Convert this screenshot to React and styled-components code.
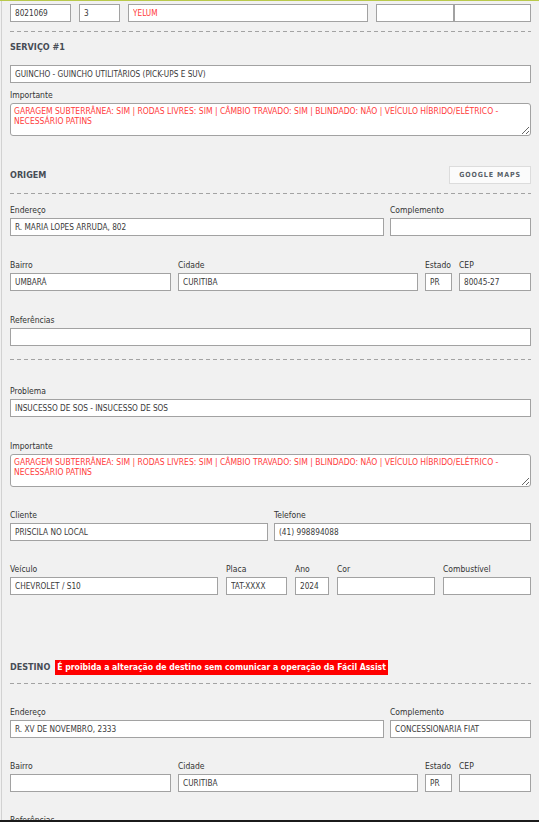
import React from 'react';
import styled, { createGlobalStyle } from 'styled-components';

const Global = createGlobalStyle`
  html, body {
    margin: 0;
    padding: 0;
    background: #f1f1f1;
  }
  body {
    font-family: 'DejaVu Sans Condensed', 'DejaVu Sans', sans-serif;
    font-stretch: condensed;
    color: #333;
    overflow: hidden;
  }
`;

const Screen = styled.div`
  border-top: 1px solid #b9c94c;
  min-height: 822px;
  box-sizing: border-box;
`;

const Panel = styled.div`
  margin-left: 1px;
  border-left: 1px solid #d2d2d2;
  padding: 3px 8px 0 8px;
  min-height: 822px;
  box-sizing: border-box;
`;

const Row = styled.div`
  display: grid;
  grid-template-columns: ${p => p.$cols || '1fr'};
  column-gap: ${p => p.$gap || '6px'};
  margin-top: ${p => p.$mt || 0}px;
`;

const Pair = styled.div`
  display: grid;
  grid-template-columns: 78px 1fr;
`;

const Divider = styled.div`
  height: 1px;
  margin-top: ${p => p.$mt || 0}px;
  background: repeating-linear-gradient(90deg, #a3a3a3 0 4px, transparent 4px 7px);
`;

const SectionHead = styled.div`
  display: flex;
  align-items: center;
  gap: 5px;
  height: ${p => p.$h || 11}px;
  margin-top: ${p => p.$mt || 0}px;
`;

const Title = styled.h3`
  margin: 0;
  font-size: 9px;
  line-height: 11px;
  font-weight: 700;
  color: #464c55;
`;

const Warning = styled.span`
  background: #ff0000;
  color: #fff;
  font-weight: 700;
  font-size: 8.6px;
  line-height: 15px;
  padding: 0 2px;
`;

const MapsButton = styled.button`
  margin-left: auto;
  width: 82px;
  height: 18px;
  padding: 0;
  background: #fbfbfb;
  border: 1px solid #dcdcdc;
  font-family: inherit;
  font-stretch: condensed;
  font-size: 7px;
  font-weight: 700;
  letter-spacing: 0.9px;
  color: #575f68;
`;

const Label = styled.label`
  display: block;
  font-size: 8.5px;
  line-height: 11px;
  margin-bottom: 2px;
  color: #333;
  white-space: nowrap;
`;

const Input = styled.input`
  display: block;
  box-sizing: border-box;
  width: 100%;
  height: 18px;
  margin: 0;
  padding: 0 4px;
  border: 1px solid #a2a2a2;
  border-radius: 0;
  background: #fff;
  font-family: inherit;
  font-stretch: condensed;
  font-size: 8.2px;
  color: ${p => (p.$alert ? '#ff3b3b' : '#3a3a3a')};
  outline: none;
`;

const Notes = styled.textarea`
  display: block;
  box-sizing: border-box;
  width: 100%;
  height: 33px;
  margin: 0;
  padding: 2px 3px;
  border: 1px solid #a2a2a2;
  border-radius: 3px;
  background: #fff;
  font-family: inherit;
  font-stretch: condensed;
  font-size: 8.5px;
  line-height: 10px;
  color: #ff3b3b;
  resize: vertical;
  outline: none;
`;

const BottomEdge = styled.div`
  position: fixed;
  left: 0;
  right: 0;
  bottom: 0;
  height: 2px;
  background: #1b1b1b;
`;

const Field = ({ label, value = '', alert }) => (
  <div>
    {label !== undefined && <Label>{label}</Label>}
    <Input readOnly value={value} $alert={alert} />
  </div>
);

const NOTE =
  'GARAGEM SUBTERRÂNEA: SIM | RODAS LIVRES: SIM | CÂMBIO TRAVADO: SIM | BLINDADO: NÃO | VEÍCULO HÍBRIDO/ELÉTRICO - NECESSÁRIO PATINS';

const App = () => (
  <Screen>
    <Global />
    <Panel>
      <Row $cols="61px 41px 240px 1fr" $gap="8px">
        <Field value="8021069" />
        <Field value="3" />
        <Field value="YELUM" alert />
        <Pair>
          <Field value="" />
          <Field value="" />
        </Pair>
      </Row>

      <Divider $mt={9} />
      <SectionHead $mt={10}>
        <Title>SERVIÇO #1</Title>
      </SectionHead>
      <Row $mt={12}>
        <Field value="GUINCHO - GUINCHO UTILITÁRIOS (PICK-UPS E SUV)" />
      </Row>
      <Row $mt={7}>
        <div>
          <Label>Importante</Label>
          <Notes readOnly value={NOTE} />
        </div>
      </Row>

      <SectionHead $mt={30} $h={18}>
        <Title>ORIGEM</Title>
        <MapsButton>GOOGLE MAPS</MapsButton>
      </SectionHead>
      <Divider $mt={9} />
      <Row $mt={11} $cols="374px 1fr">
        <Field label="Endereço" value="R. MARIA LOPES ARRUDA, 802" />
        <Field label="Complemento" />
      </Row>
      <Row $mt={24} $cols="161px 240px 27px 1fr" $gap="7px">
        <Field label="Bairro" value="UMBARÁ" />
        <Field label="Cidade" value="CURITIBA" />
        <Field label="Estado" value="PR" />
        <Field label="CEP" value="80045-27" />
      </Row>
      <Row $mt={24}>
        <Field label="Referências" />
      </Row>

      <Divider $mt={13} />
      <Row $mt={26}>
        <Field label="Problema" value="INSUCESSO DE SOS - INSUCESSO DE SOS" />
      </Row>
      <Row $mt={24}>
        <div>
          <Label>Importante</Label>
          <Notes readOnly value={NOTE} />
        </div>
      </Row>
      <Row $mt={23} $cols="258px 1fr">
        <Field label="Cliente" value="PRISCILA NO LOCAL" />
        <Field label="Telefone" value="(41) 998894088" />
      </Row>
      <Row $mt={23} $cols="208px 61px 34px 98px 1fr" $gap="8px">
        <Field label="Veículo" value="CHEVROLET / S10" />
        <Field label="Placa" value="TAT-XXXX" />
        <Field label="Ano" value="2024" />
        <Field label="Cor" />
        <Field label="Combustível" />
      </Row>

      <SectionHead $mt={64} $h={16}>
        <Title>DESTINO</Title>
        <Warning>É proibida a alteração de destino sem comunicar a operação da Fácil Assist</Warning>
      </SectionHead>
      <Divider $mt={8} />
      <Row $mt={23} $cols="374px 1fr">
        <Field label="Endereço" value="R. XV DE NOVEMBRO, 2333" />
        <Field label="Complemento" value="CONCESSIONARIA FIAT" />
      </Row>
      <Row $mt={23} $cols="161px 240px 27px 1fr" $gap="7px">
        <Field label="Bairro" />
        <Field label="Cidade" value="CURITIBA" />
        <Field label="Estado" value="PR" />
        <Field label="CEP" />
      </Row>
      <Row $mt={23}>
        <Field label="Referências" />
      </Row>
    </Panel>
    <BottomEdge />
  </Screen>
);

export default App;
